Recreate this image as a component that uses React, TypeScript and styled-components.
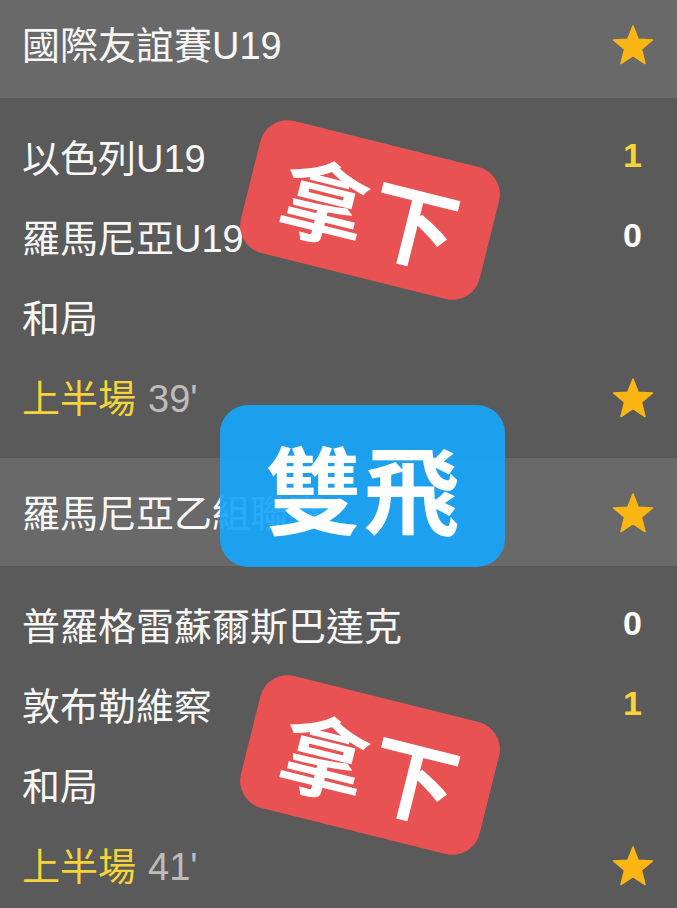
import React from 'react';
import styled, { createGlobalStyle } from 'styled-components';

const GlobalStyle = createGlobalStyle`
  html, body {
    margin: 0;
    padding: 0;
    background: #5a5a5a;
  }
  body {
    font-family: "Liberation Sans", "Noto Sans CJK TC", sans-serif;
  }
`;

const ScreenStyled = styled.div`
  position: relative;
  width: 677px;
  height: 908px;
  overflow: hidden;
  background-color: #5a5a5a;
`;

const ListStyled = styled.div`
  margin-top: -10px;
  display: flex;
  flex-direction: column;
`;

const HeaderStyled = styled.div`
  height: 108px;
  box-sizing: border-box;
  background-color: #696969;
  display: flex;
  align-items: center;
  justify-content: space-between;
  padding: 0 23px 4px 22px;
  color: #f7f7f7;
  font-size: 38px;
`;

const BodyStyled = styled.div`
  padding: 20px 0;
`;

const RowStyled = styled.div<{ $right: number }>`
  height: 80px;
  box-sizing: border-box;
  display: flex;
  align-items: center;
  justify-content: space-between;
  padding: 0 ${p => p.$right}px 5px 22px;
  color: #f7f7f7;
  font-size: 38px;
`;

const ScoreStyled = styled.span<{ $win: boolean }>`
  font-weight: 700;
  font-size: 34px;
  color: ${p => (p.$win ? '#f7d23b' : '#ffffff')};
`;

const PeriodStyled = styled.span`
  color: #f5d33a;
`;

const MinuteStyled = styled.span`
  color: #bdbdbd;
  margin-left: 12px;
`;

const IconSlotStyled = styled.span`
  display: flex;
  margin-top: 5px;
`;

const StampStyled = styled.div<{ $color: string; $angle: number }>`
  position: absolute;
  display: flex;
  align-items: center;
  justify-content: center;
  background-color: ${p => p.$color};
  border-radius: 28px;
  transform: rotate(${p => p.$angle}deg);
  color: #ffffff;
  font-family: "Noto Sans CJK TC", sans-serif;
  font-weight: 700;
  line-height: 1;
`;

const StampTextStyled = styled.span<{ $size: number; $gap: number }>`
  font-size: ${p => p.$size}px;
  letter-spacing: ${p => p.$gap}px;
  margin-right: -${p => p.$gap}px;
`;

const Star = () => (
  <svg width="42" height="40" viewBox="0 0 42 40">
    <polygon
      points="21,1 26.2,14.2 40.5,15 29.4,24.2 33,38.5 21,30.6 9,38.5 12.6,24.2 1.5,15 15.8,14.2"
      fill="#fbb614"
      stroke="#fbb614"
      strokeWidth="1.5"
      strokeLinejoin="round"
    />
  </svg>
);

type Match = {
  league: string;
  home: string;
  away: string;
  homeScore: number;
  awayScore: number;
  result: string;
  minute: string;
};

const matches: Match[] = [
  {
    league: '國際友誼賽U19',
    home: '以色列U19',
    away: '羅馬尼亞U19',
    homeScore: 1,
    awayScore: 0,
    result: '和局',
    minute: "39'",
  },
  {
    league: '羅馬尼亞乙組聯賽',
    home: '普羅格雷蘇爾斯巴達克',
    away: '敦布勒維察',
    homeScore: 0,
    awayScore: 1,
    result: '和局',
    minute: "41'",
  },
];

const RED = 'rgba(244, 82, 82, 0.93)';
const BLUE = 'rgba(24, 166, 249, 0.93)';

const stamps = [
  { text: '拿下', color: RED, angle: 14, left: 247, top: 142, w: 246, h: 136, size: 88, gap: 4 },
  { text: '雙飛', color: BLUE, angle: 0, left: 220, top: 405, w: 285, h: 162, size: 96, gap: 2 },
  { text: '拿下', color: RED, angle: 14, left: 247, top: 697, w: 246, h: 136, size: 88, gap: 4 },
];

const App = () => {
  return <ScreenStyled>
    <GlobalStyle />
    <ListStyled>
      {matches.map((m, i) => (
        <div key={i}>
          <HeaderStyled>
            <span>{m.league}</span>
            <IconSlotStyled><Star /></IconSlotStyled>
          </HeaderStyled>
          <BodyStyled>
            <RowStyled $right={35}>
              <span>{m.home}</span>
              <ScoreStyled $win={m.homeScore > m.awayScore}>{m.homeScore}</ScoreStyled>
            </RowStyled>
            <RowStyled $right={35}>
              <span>{m.away}</span>
              <ScoreStyled $win={m.awayScore > m.homeScore}>{m.awayScore}</ScoreStyled>
            </RowStyled>
            <RowStyled $right={35}>
              <span>{m.result}</span>
            </RowStyled>
            <RowStyled $right={23}>
              <span>
                <PeriodStyled>上半場</PeriodStyled>
                <MinuteStyled>{m.minute}</MinuteStyled>
              </span>
              <IconSlotStyled><Star /></IconSlotStyled>
            </RowStyled>
          </BodyStyled>
        </div>
      ))}
    </ListStyled>
    {stamps.map((s, i) => (
      <StampStyled
        key={i}
        $color={s.color}
        $angle={s.angle}
        style={{ left: s.left, top: s.top, width: s.w, height: s.h }}
      >
        <StampTextStyled $size={s.size} $gap={s.gap}>{s.text}</StampTextStyled>
      </StampStyled>
    ))}
  </ScreenStyled>
};

export default App;
